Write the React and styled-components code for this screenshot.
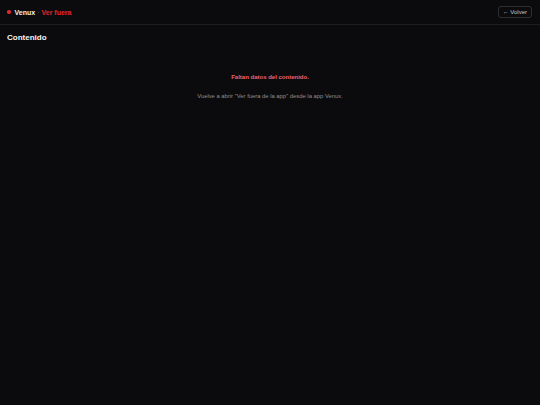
import React from "react";
import styled, { createGlobalStyle } from "styled-components";

const GlobalStyle = createGlobalStyle`
  html, body {
    margin: 0;
    padding: 0;
    background: #0b0b0d;
    font-family: "Liberation Sans", Arial, sans-serif;
  }
  #root {
    min-height: 405px;
  }
`;

const Page = styled.div`
  min-height: 405px;
  background: #0b0b0d;
  color: #f2f2f2;
`;

const Header = styled.header`
  display: flex;
  align-items: center;
  justify-content: space-between;
  height: 24px;
  padding: 0 8px 0 7px;
  border-bottom: 1px solid #1d1d21;
`;

const Brand = styled.div`
  display: flex;
  align-items: center;
  gap: 2px;
  font-size: 7px;
  font-weight: 700;
`;

const Dot = styled.span`
  width: 3.5px;
  height: 3.5px;
  border-radius: 50%;
  background: #e5262e;
  margin-right: 2px;
`;

const Sep = styled.span`
  color: #6a6a70;
  font-weight: 400;
`;

const Accent = styled.span`
  color: #e5262e;
`;

const BackButton = styled.button`
  font-family: inherit;
  font-size: 6px;
  color: #c8c8cc;
  background: transparent;
  border: 1px solid #2e2e33;
  border-radius: 3px;
  padding: 0 4px;
  height: 12px;
  display: flex;
  align-items: center;
  gap: 2px;
`;

const Main = styled.main`
  padding: 8px 7px;
`;

const Title = styled.h1`
  margin: 0;
  font-size: 8px;
  font-weight: 700;
  color: #f4f4f4;
`;

const Notice = styled.section`
  display: flex;
  flex-direction: column;
  align-items: center;
  margin-top: 32px;
  gap: 13px;
`;

const ErrorText = styled.p`
  margin: 0;
  font-size: 6px;
  font-weight: 700;
  color: #f0616d;
`;

const Hint = styled.p`
  margin: 0;
  font-size: 5.85px;
  color: #8f8f94;
`;

export default function App() {
  return (
    <Page>
      <GlobalStyle />
      <Header>
        <Brand>
          <Dot />
          <span>Venux</span>
          <Sep>·</Sep>
          <Accent>Ver fuera</Accent>
        </Brand>
        <BackButton>← Volver</BackButton>
      </Header>
      <Main>
        <Title>Contenido</Title>
        <Notice>
          <ErrorText>Faltan datos del contenido.</ErrorText>
          <Hint>Vuelve a abrir "Ver fuera de la app" desde la app Venux.</Hint>
        </Notice>
      </Main>
    </Page>
  );
}
